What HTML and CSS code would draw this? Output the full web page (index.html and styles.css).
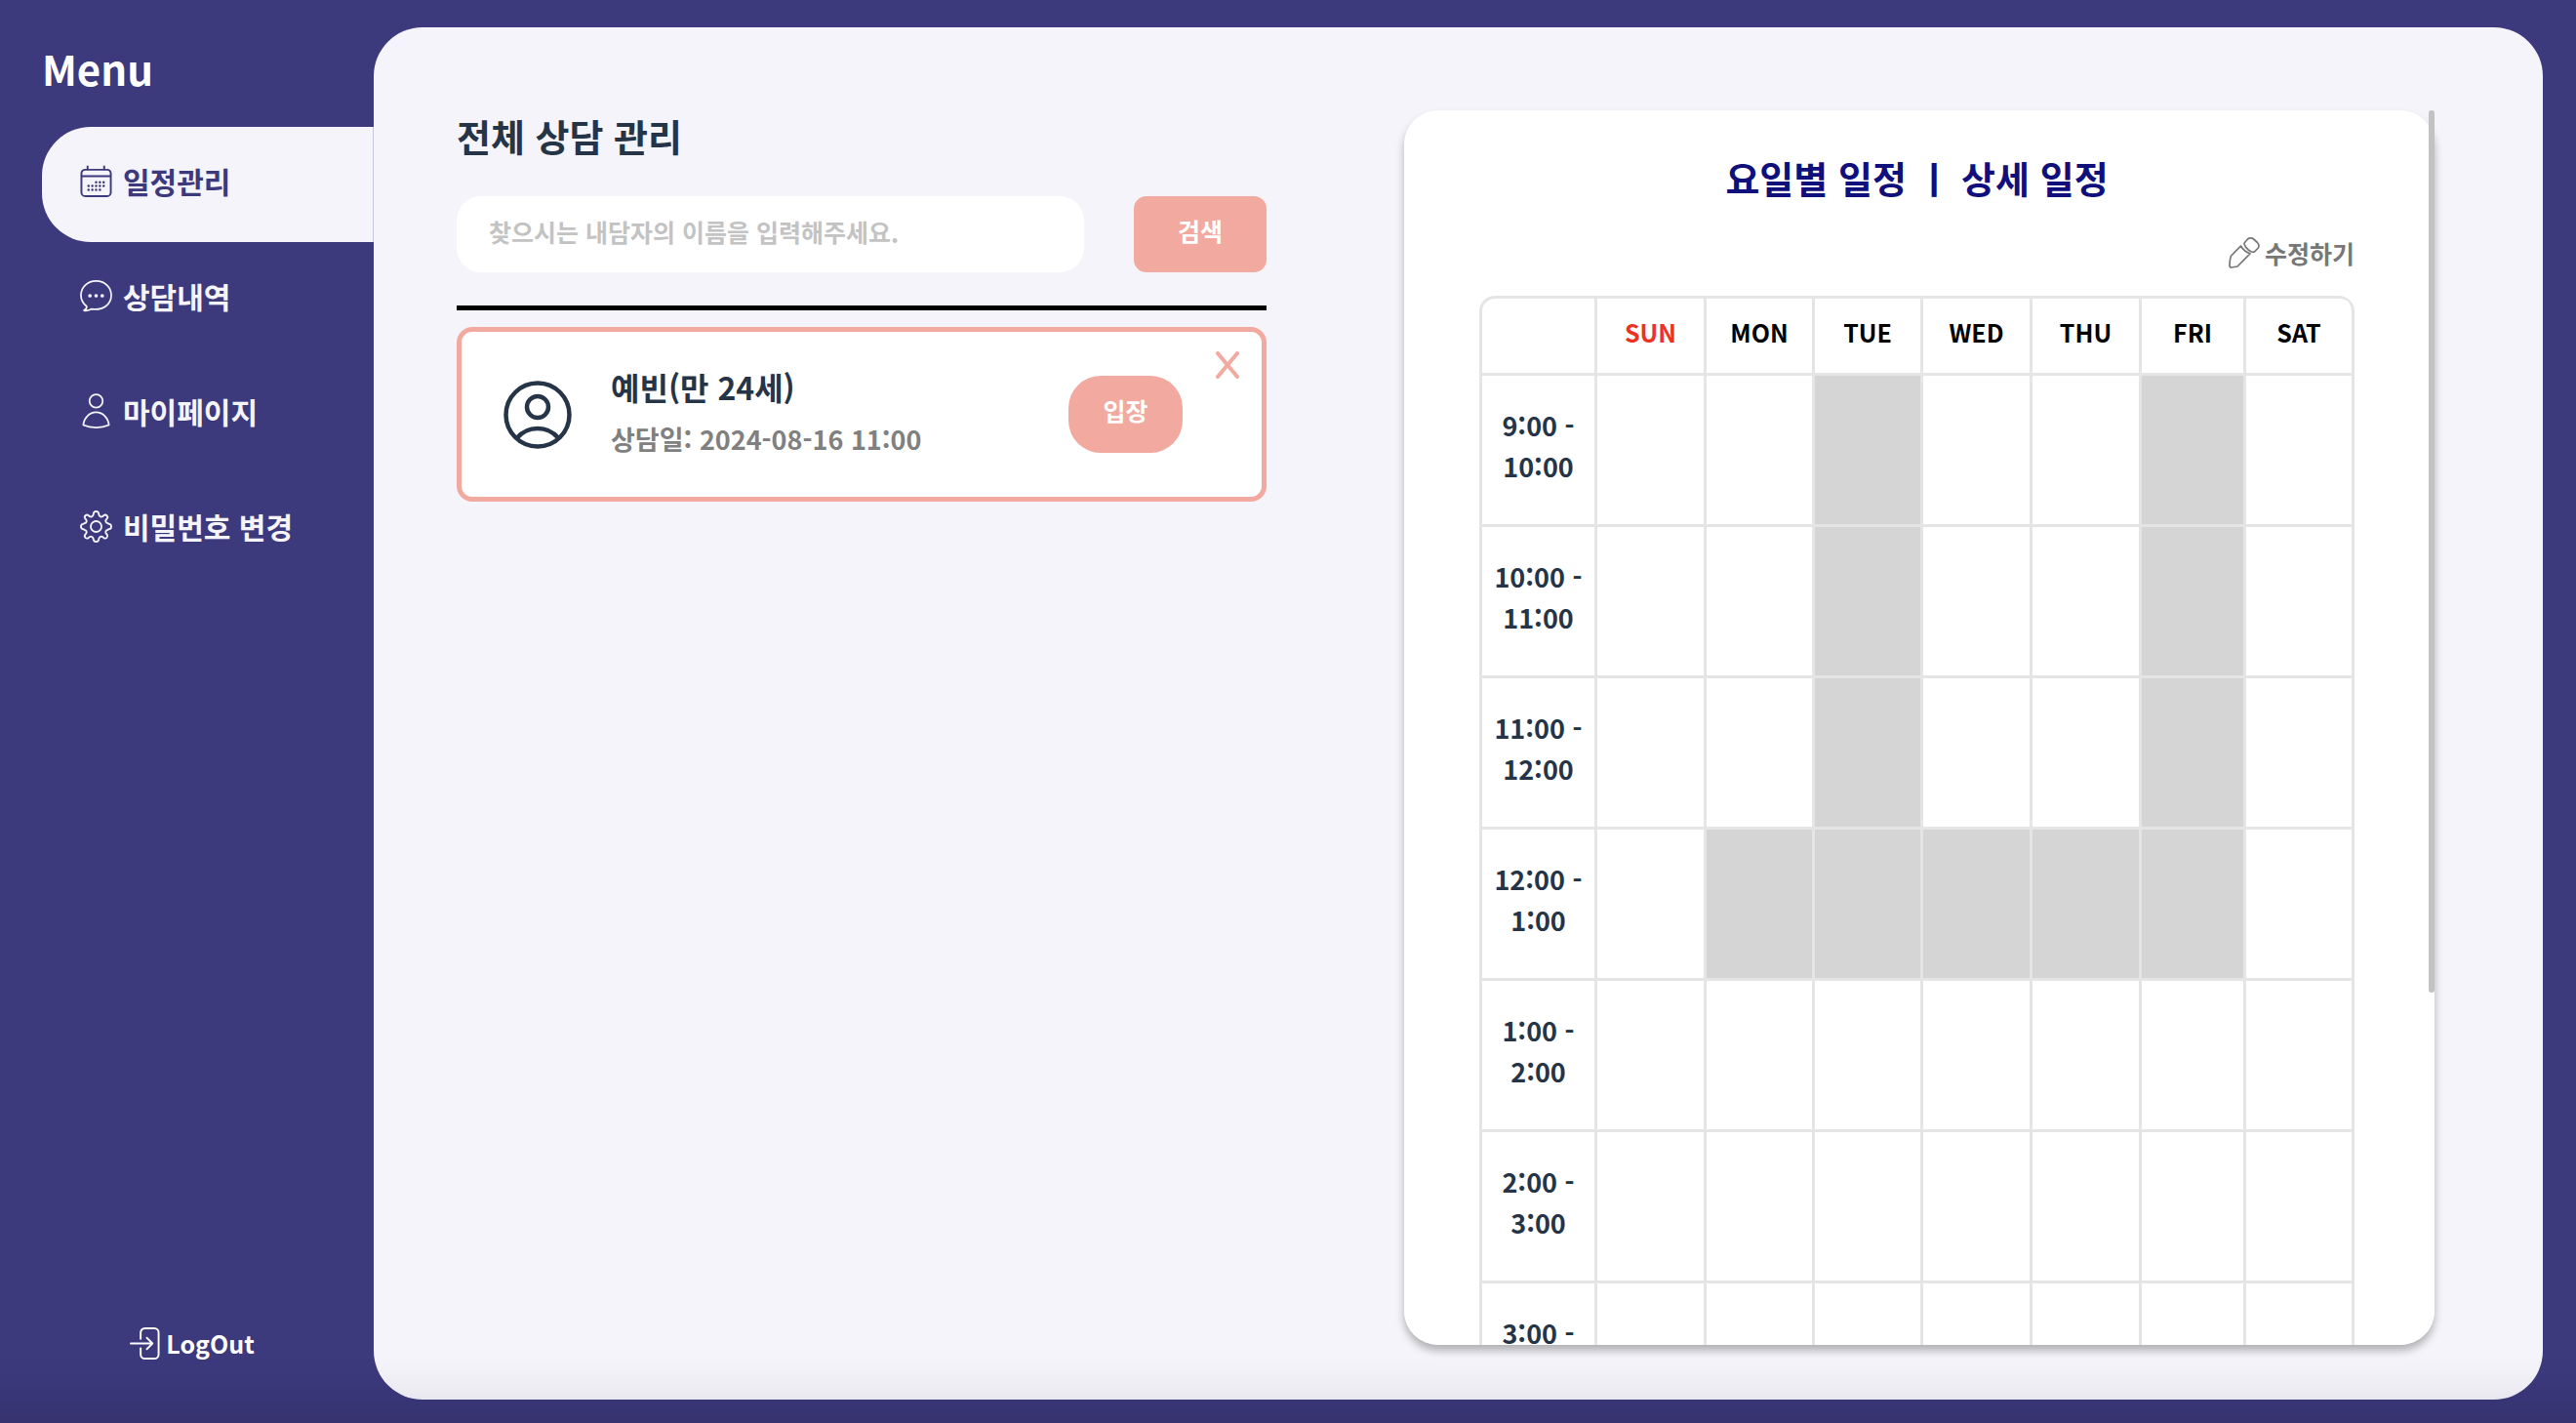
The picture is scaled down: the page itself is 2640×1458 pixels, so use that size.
FILE: index.html
```html
<!DOCTYPE html>
<html lang="ko">
<head>
<meta charset="utf-8">
<meta name="viewport" content="width=device-width, initial-scale=1">
<title>일정관리</title>
<link rel="stylesheet" href="styles.css">
</head>
<body>
<div class="app">
  <aside class="sidebar">
    <h1 class="menu-title">Menu</h1>
    <nav class="nav">
      <a class="nav-item active" href="#schedule">
        <svg class="nav-icon" viewBox="0 0 34 34" fill="none" stroke="currentColor" stroke-width="2" aria-hidden="true">
          <rect x="1.5" y="5" width="31" height="28" rx="4"/>
          <path d="M1.5 11.8h31M8 .8v4.5M25.500 .8v4.500" />
          <path d="M17 18.200h9M9 22.200h17M9 26.200h14" stroke-width="2.600" stroke-linecap="round" stroke-dasharray="0 4"/>
        </svg>
        <span>일정관리</span>
      </a>
      <a class="nav-item" href="#history">
        <svg class="nav-icon" viewBox="0 0 34 34" fill="none" stroke="currentColor" stroke-width="1.800" stroke-linejoin="round" aria-hidden="true">
          <path d="M17 1C8 1 1 7.500 1 16c0 5 2.300 8.800 5.900 11.500.6 1.600-.2 3-2.700 4.500 2.800.5 6-.2 8.100-1.500C24.500 32.500 33 25.500 33 16 33 7.500 26 1 17 1z"/>
          <g fill="currentColor" stroke="none"><circle cx="10.500" cy="16.500" r="1.900"/><circle cx="17" cy="16.500" r="1.900"/><circle cx="23.500" cy="16.500" r="1.900"/></g>
        </svg>
        <span>상담내역</span>
      </a>
      <a class="nav-item" href="#mypage">
        <svg class="nav-icon" viewBox="0 0 34 34" fill="none" stroke="currentColor" stroke-width="1.800" stroke-linejoin="round" aria-hidden="true">
          <circle cx="17" cy="6" r="7"/>
          <path d="M3.500 31.500C4 24 9.800 18 17 18S30 24 30.500 31.500c-8 3.500-19 3.500-27 0z"/>
        </svg>
        <span>마이페이지</span>
      </a>
      <a class="nav-item" href="#password">
        <svg class="nav-icon" viewBox="0 0 34 34" fill="none" stroke="currentColor" stroke-width="1.900" stroke-linejoin="round" aria-hidden="true">
          <circle cx="17" cy="17" r="5.700"/>
          <path d="M14.300 3.200Q14.600 1 17 1t2.700 2.200l.3 1.500q.4 1.500 1.700 1.900 1.200.4 2.300-.5l1.200-1q1.600-1.200 3.100.3t.3 3.100l-1 1.200q-.8 1.100-.4 2.200.5 1.300 2 1.700l1.500.7Q33 14.600 33 17t-2.300 2.700l-1.500.7q-1.500.4-2 1.700-.4 1.200.4 2.300l1 1.200q1.200 1.600-.3 3.100t-3.100.3l-1.200-1q-1.100-.8-2.300-.4-1.300.5-1.700 2l-.3 1.200Q19.400 33 17 33t-2.700-2.200l-.3-1.200q-.4-1.500-1.700-2-1.200-.4-2.300.4l-1.200 1q-1.600 1.200-3.100-.3t-.3-3.100l1-1.200q.8-1.100.4-2.300-.5-1.300-2-1.700l-1.500-.7Q1 19.400 1 17t2.300-2.700l1.500-.7q1.500-.4 2-1.700.4-1.100-.4-2.200l-1-1.200q-1.200-1.600.3-3.100t3.100-.3l1.200 1q1.100.9 2.300.5 1.300-.4 1.700-1.900z"/>
        </svg>
        <span>비밀번호 변경</span>
      </a>
    </nav>
    <button class="logout" type="button">
      <svg class="logout-icon" viewBox="0 0 32 34" fill="none" stroke="currentColor" stroke-width="2" stroke-linecap="round" stroke-linejoin="round" aria-hidden="true">
        <path d="M11.500 12V5.500a4.500 4.500 0 0 1 4.500-4.500h10a4.500 4.500 0 0 1 4.500 4.500v23a4.500 4.500 0 0 1-4.500 4.500h-10a4.500 4.500 0 0 1-4.500-4.500V22"/>
        <path d="M1 17h23M18 11l6 6-6 6"/>
      </svg>
      <span>LogOut</span>
    </button>
  </aside>

  <main class="panel">
    <section class="clients">
      <h2 class="section-title">전체 상담 관리</h2>
      <form class="search" role="search">
        <input class="search-input" type="text" aria-label="내담자 이름" placeholder="찾으시는 내담자의 이름을 입력해주세요.">
        <button class="search-button" type="button">검색</button>
      </form>
      <article class="client-card">
        <svg class="avatar" viewBox="0 0 70 70" fill="none" stroke="currentColor" stroke-width="4.500" aria-hidden="true">
          <circle cx="35" cy="35" r="32.500"/>
          <circle cx="35" cy="27" r="11"/>
          <path d="M13.500 59a28 28 0 0 1 43 0"/>
        </svg>
        <div class="client-info">
          <h3 class="client-name">예빈(만 24세)</h3>
          <p class="client-date">상담일: 2024-08-16 11:00</p>
        </div>
        <button class="enter-button" type="button">입장</button>
        <button class="close-button" type="button" aria-label="삭제">
          <svg viewBox="0 0 24 28" fill="none" stroke="currentColor" stroke-width="4" stroke-linecap="round" aria-hidden="true"><path d="M2 2l20 24M22 2L2 26"/></svg>
        </button>
      </article>
    </section>

    <section class="schedule">
      <div class="schedule-body">
        <h2 class="schedule-tabs"><button type="button">요일별 일정</button> ㅣ <button type="button">상세 일정</button></h2>
        <div class="schedule-actions">
          <button class="edit-button" type="button">
            <svg class="edit-icon" viewBox="0 0 32 32" fill="none" stroke="currentColor" stroke-width="1.700" stroke-linejoin="round" aria-hidden="true">
              <path d="M12.500 9 2.300 19.500Q1 24 1 29q0 2 2 2l6-1L22 16.800Q15.500 14.500 12.500 9z"/>
              <path d="M16.500 5.500 19.500 2q2.500-2 5.500-.5l4.500 4q2.500 2.800.8 5.500L27 14.500q-1.500 1.200-3.500.5-5.500-2.500-7.300-7.500-.3-1.200.3-2z"/>
            </svg>
            <span>수정하기</span>
          </button>
        </div>
        <table class="timetable">
          <colgroup><col class="c-time"><col class="c-sun"><col class="c-day"><col class="c-day"><col class="c-wed"><col class="c-wed"><col class="c-fri"><col class="c-day"></colgroup>
          <thead>
            <tr><td></td><th class="sun">SUN</th><th>MON</th><th>TUE</th><th>WED</th><th>THU</th><th>FRI</th><th>SAT</th></tr>
          </thead>
          <tbody>
            <tr><th>9:00 -<br>10:00</th><td></td><td></td><td class="off"></td><td></td><td></td><td class="off"></td><td></td></tr>
            <tr><th>10:00 -<br>11:00</th><td></td><td></td><td class="off"></td><td></td><td></td><td class="off"></td><td></td></tr>
            <tr><th>11:00 -<br>12:00</th><td></td><td></td><td class="off"></td><td></td><td></td><td class="off"></td><td></td></tr>
            <tr><th>12:00 -<br>1:00</th><td></td><td class="off"></td><td class="off"></td><td class="off"></td><td class="off"></td><td class="off"></td><td></td></tr>
            <tr><th>1:00 -<br>2:00</th><td></td><td></td><td></td><td></td><td></td><td></td><td></td></tr>
            <tr><th>2:00 -<br>3:00</th><td></td><td></td><td></td><td></td><td></td><td></td><td></td></tr>
            <tr><th>3:00 -<br>4:00</th><td></td><td></td><td></td><td></td><td></td><td></td><td></td></tr>
          </tbody>
        </table>
      </div>
      <div class="scroll-thumb"></div>
    </section>
  </main>
</div>
</body>
</html>
```

FILE: styles.css
```css
:root {
  --indigo: #3c397d;
  --paper: #f5f4fa;
  --ink: #253547;
  --pink: #f2aaa0;
  --line: #e5e5e5;
}

* { box-sizing: border-box; }

body {
  margin: 0;
  background: var(--indigo);
  color: var(--ink);
  font-family: "Noto Sans CJK KR", "Noto Sans", sans-serif;
  font-weight: 700;
}

/* soft darkening along the bottom edge of the window */
body::after {
  content: "";
  position: fixed;
  inset: auto 0 0;
  height: 68px;
  background: linear-gradient(rgba(0, 0, 0, 0), rgba(0, 0, 0, .03) 50%, rgba(0, 0, 0, .1));
  pointer-events: none;
}

h1, h2, h3, p { margin: 0; font-weight: inherit; }

button {
  padding: 0;
  border: 0;
  background: none;
  color: inherit;
  font: inherit;
  cursor: pointer;
}

svg { display: block; flex: none; }

.app {
  display: grid;
  grid-template-columns: 383px 1fr;
  height: 100vh;
  padding: 28px 34px 24px 0;
}

/* Sidebar */
.sidebar {
  display: flex;
  flex-direction: column;
  padding: 12px 0 28px 43px;
  color: #fff;
}

.menu-title {
  margin-bottom: 30px;
  font-size: 42px;
  line-height: 60px;
}

.nav-item {
  display: flex;
  align-items: center;
  gap: 11px;
  height: 118px;
  padding: 0 0 8px 39px;
  border-radius: 50px 0 0 50px;
  color: var(--paper);
  font-size: 30px;
  line-height: 40px;
  text-decoration: none;
}

.nav-item.active {
  border-right: 1px solid #c6c8df;
  background: var(--paper);
  color: var(--indigo);
}

.nav-icon {
  width: 33px;
  height: 33px;
  overflow: visible;
}

.logout {
  display: flex;
  align-items: center;
  align-self: center;
  gap: 6px;
  margin-top: auto;
  margin-right: 32px;
  font-size: 25px;
  line-height: 60px;
}

.logout-icon { width: 31px; height: 33px; }

/* Content panel */
.panel {
  display: grid;
  grid-template-columns: 830fr 1056fr;
  column-gap: 141px;
  min-height: 0;
  padding: 85px 111px 56px 85px;
  border-radius: 50px;
  background: var(--paper);
}

.clients { min-width: 0; }

.section-title {
  margin-bottom: 36px;
  font-size: 38px;
  line-height: 52px;
}

.search {
  display: flex;
  gap: 51px;
  padding-bottom: 34px;
  border-bottom: 5px solid #000;
}

.search-input {
  flex: 1;
  min-width: 0;
  height: 78px;
  padding: 0 33px 6px;
  border: 0;
  border-radius: 25px;
  background: #fff;
  color: var(--ink);
  font: inherit;
  font-size: 25px;
}

.search-input::placeholder { color: #c3c3c3; opacity: 1; }

.search-button {
  width: 136px;
  height: 78px;
  padding-bottom: 8px;
  border-radius: 13px;
  background: var(--pink);
  color: #fff;
  font-size: 25px;
}

.client-card {
  display: flex;
  height: 179px;
  margin-top: 17px;
  padding: 20px 23px 20px 43px;
  align-items: center;
  border: 5px solid var(--pink);
  border-radius: 16px;
  background: #fff;
}

.avatar { width: 70px; height: 70px; }

.client-info { flex: 1; margin-left: 40px; padding-bottom: 4px; }

.client-name { font-size: 32px; line-height: 54px; }

.client-date { color: #808080; font-size: 27px; line-height: 54px; }

.enter-button {
  width: 117px;
  height: 79px;
  padding-bottom: 10px;
  border-radius: 33px;
  background: var(--pink);
  color: #fff;
  font-size: 25px;
}

.close-button {
  align-self: flex-start;
  margin-left: 34px;
  color: var(--pink);
}

.close-button svg { width: 24px; height: 28px; }

/* Timetable card */
.schedule {
  position: relative;
  min-width: 0;
  min-height: 0;
  border-radius: 35px;
  box-shadow: 0 6px 8px rgba(0, 0, 0, .28);
}

.schedule-body {
  height: 100%;
  padding: 44px 82px 0 77px;
  overflow: hidden;
  border-radius: inherit;
  background: #fff;
}

.schedule-tabs {
  color: #10107c;
  font-size: 38px;
  line-height: 50px;
  text-align: center;
}

.schedule-actions {
  display: flex;
  justify-content: flex-end;
  margin: 32px 0 24px;
}

.edit-button {
  display: flex;
  align-items: center;
  gap: 5px;
  color: #777;
  font-size: 25px;
  line-height: 40px;
}

.edit-icon { width: 32px; height: 32px; }

.scroll-thumb {
  position: absolute;
  top: 0;
  right: 0;
  width: 6px;
  height: 71.5%;
  border-radius: 3px;
  background: #c2c2c2;
}

.timetable {
  width: 100%;
  table-layout: fixed;
  border: solid var(--line);
  border-width: 3px 0 0 3px;
  border-radius: 16px 16px 0 0;
  border-spacing: 0;
}

.c-time { width: 118px; }
.c-sun, .c-wed { width: 112px; }
.c-day { width: 111px; }
.c-fri { width: 107px; }

.timetable th,
.timetable td {
  height: 155px;
  padding: 0 0 8px;
  border: solid var(--line);
  border-width: 0 3px 3px 0;
  font-size: 27px;
  line-height: 42px;
}

.timetable thead th,
.timetable thead td {
  height: 79px;
  color: #000;
  font-size: 25px;
}

.timetable thead th:last-child { border-top-right-radius: 13px; }

.timetable thead .sun { color: #ec3323; }

.timetable .off { background: #d5d5d5; }
```
